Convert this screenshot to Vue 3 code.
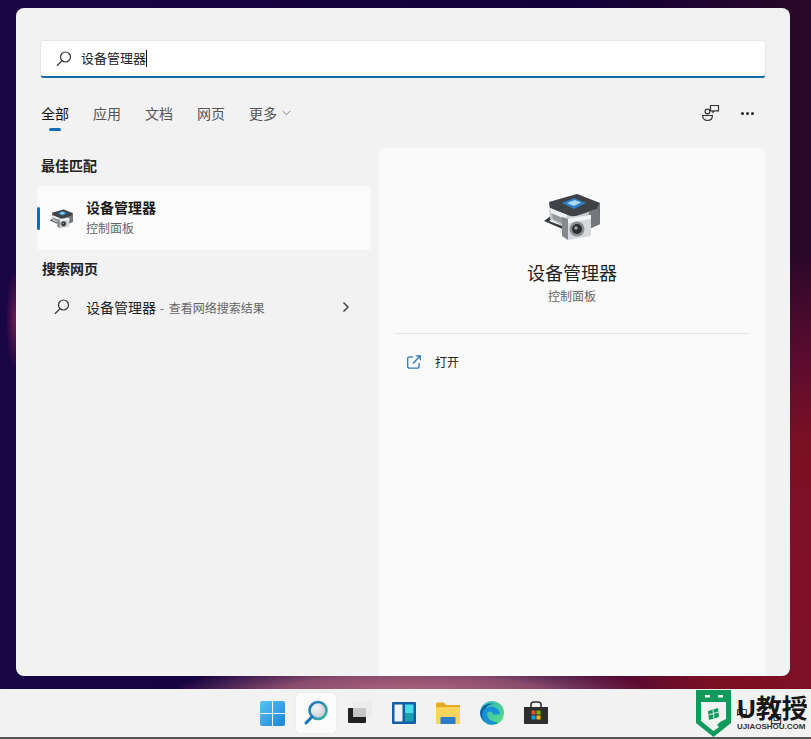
<template>
  <div class="desktop">
    <div class="wallpaper">
      <div class="panel">
        <div class="search-box">
          <svg class="search-icon" width="18" height="18" viewBox="0 0 18 18"><circle cx="10.5" cy="7" r="5" fill="none" stroke="#333" stroke-width="1.2"/><path d="M7 10.6 2 15.8" stroke="#333" stroke-width="1.3" fill="none"/></svg>
          <span class="search-text">设备管理器</span><span class="caret"></span>
        </div>

        <div class="tabs">
          <div v-for="(tab, i) in tabs" :key="tab" class="tab" :class="{ active: i === 0 }">
            {{ tab }}
            <svg v-if="tab === '更多'" class="more-arrow" width="9" height="6" viewBox="0 0 9 6"><path d="M.8 1 4.5 4.7 8.2 1" fill="none" stroke="#888" stroke-width="1"/></svg>
          </div>
          <div class="tab-tools">
            <svg width="20" height="20" viewBox="0 0 20 20" fill="none" stroke="#333" stroke-width="1.2">
              <circle cx="6.500" cy="8.500" r="2.400"/>
              <path d="M1.600 12.500h9.800c0 3-2 5-4.900 5s-4.900-2-4.900-5Z"/>
              <path d="M9.500 2.500h8v5.300h-4l-1.500 1.500V7.800h-2.500Z"/>
            </svg>
            <div class="dots"><i></i><i></i><i></i></div>
          </div>
        </div>

        <div class="content">
          <div class="results">
            <h3 class="group-title">最佳匹配</h3>
            <div class="best-card">
              <span class="marker"></span>
              <svg class="small-device" width="29" height="23" viewBox="0 0 70 56">
                <use href="#device-icon"/>
              </svg>
              <div class="best-text">
                <div class="best-name">设备管理器</div>
                <div class="best-sub">控制面板</div>
              </div>
            </div>
            <h3 class="group-title web-title">搜索网页</h3>
            <div class="web-row">
              <svg class="web-search" width="18" height="18" viewBox="0 0 18 18"><circle cx="10.5" cy="7" r="5" fill="none" stroke="#333" stroke-width="1.2"/><path d="M7 10.6 2 15.8" stroke="#333" stroke-width="1.3" fill="none"/></svg>
              <span class="web-name">设备管理器</span>
              <span class="web-hint">- 查看网络搜索结果</span>
              <svg class="chevron" width="8" height="12" viewBox="0 0 8 12"><path d="M1.5 1.5 6 6l-4.500 4.500" fill="none" stroke="#444" stroke-width="1.5"/></svg>
            </div>
          </div>

          <div class="detail">
            <svg class="big-device" width="70" height="56" viewBox="0 0 70 56">
              <defs>
                <g id="device-icon">
                  <!-- paper tray -->
                  <path d="M7 33 15 27l2 1.500-5 4.500 16 6v3Z" fill="#34373a"/>
                  <!-- printer body -->
                  <path d="M12 14 40 6 63 15V36L40 46 13 31Z" fill="#bfc1c4"/>
                  <path d="M12 14 40 6 63 15 60 21 36 29 13 20Z" fill="#3f4347"/>
                  <path d="M63 15V36L52 41V24L60 21Z" fill="#6d7175"/>
                  <path d="M52 24 60 21l3 6v9l-11 5Z" fill="#74787c"/>
                  <path d="M13 20 30 27v5L14 25Z" fill="#eeeff0"/>
                  <path d="M15 25.500 28 31v6L16 31Z" fill="#96999c"/>
                  <!-- screen -->
                  <path d="M25 15 37 10 49 15 37 21Z" fill="#2f7fc4"/>
                  <path d="M30 15 38 12l6 2.500-7 3.500Z" fill="#a9d8f2"/>
                  <!-- camera -->
                  <path d="M25 29 54 27V48L31 52 25 48Z" fill="#d6d8da"/>
                  <path d="M25 29l6 2V52l-6-4Z" fill="#85888c"/>
                  <path d="M31 31 54 27v4L31 35Z" fill="#f3f4f5"/>
                  <circle cx="40" cy="41" r="7.500" fill="#8b8e91"/>
                  <circle cx="40" cy="41" r="5" fill="#2b2d30"/>
                  <circle cx="39" cy="40" r="1.800" fill="#9fa5ab"/>
                </g>
              </defs>
              <use href="#device-icon"/>
            </svg>
            <div class="detail-name">设备管理器</div>
            <div class="detail-sub">控制面板</div>
            <div class="detail-line"></div>
            <div class="open-row">
              <svg width="16" height="16" viewBox="0 0 16 16" fill="none" stroke="#2c78b8" stroke-width="1.300"><path d="M7 2.800H3.500a1.800 1.800 0 0 0-1.800 1.800v7.800a1.800 1.800 0 0 0 1.800 1.800h7.800a1.800 1.800 0 0 0 1.800-1.800V9"/><path d="M7 9.500 14 2M9.800 1.800h4.500v4.500"/></svg>
              <span>打开</span>
            </div>
          </div>
        </div>
      </div>
    </div>

    <div class="taskbar">
      <div class="task-icon">
        <svg width="25" height="25" viewBox="0 0 24 24">
          <defs>
            <linearGradient id="win" x1="0" y1="0" x2="1" y2="1"><stop offset="0" stop-color="#56c5f3"/><stop offset="1" stop-color="#1b83d6"/></linearGradient>
          </defs>
          <path d="M0 2a2 2 0 0 1 2-2h9.500v11.500H0ZM12.500 0H22a2 2 0 0 1 2 2v9.500H12.500ZM0 12.500h11.500V24H2a2 2 0 0 1-2-2ZM12.500 12.500H24V22a2 2 0 0 1-2 2h-9.500Z" fill="url(#win)"/>
        </svg>
      </div>
      <div class="task-icon active">
        <svg width="26" height="26" viewBox="0 0 26 26">
          <defs>
            <linearGradient id="lens" x1="0" y1="0" x2="1" y2="1"><stop offset="0" stop-color="#1c6fc0"/><stop offset="1" stop-color="#37b89a"/></linearGradient>
            <radialGradient id="glass" cx=".4" cy=".35" r=".7"><stop offset="0" stop-color="#f6f6f8"/><stop offset="1" stop-color="#c2c6cf"/></radialGradient>
          </defs>
          <circle cx="15" cy="10.500" r="8.500" fill="url(#glass)" stroke="url(#lens)" stroke-width="2.600"/>
          <path d="M9 16.800 3 23" stroke="#1a70bd" stroke-width="3" stroke-linecap="round"/>
        </svg>
      </div>
      <div class="task-icon">
        <svg width="24" height="24" viewBox="0 0 24 24">
          <rect x="5" y="0" width="19" height="16" rx="1" fill="#ececec"/>
          <rect x="0" y="7" width="18" height="15" rx="1" fill="#222"/>
          <rect x="5" y="7" width="13" height="9" fill="#c6c6c6"/>
        </svg>
      </div>
      <div class="task-icon">
        <svg width="24" height="24" viewBox="0 0 24 24">
          <rect x="0" y="1" width="24" height="22" rx="1" fill="#125ea8"/>
          <rect x="2.500" y="3.500" width="8" height="17" fill="#eef3f8"/>
          <rect x="13" y="3.500" width="8.500" height="9" fill="#46dbe6"/>
          <rect x="13" y="12.500" width="8.500" height="8" fill="#19a0b0"/>
        </svg>
      </div>
      <div class="task-icon">
        <svg width="24" height="24" viewBox="0 0 24 24">
          <path d="M0 3a1.500 1.500 0 0 1 1.500-1.500H8L10 4h14v4H0Z" fill="#e5a91f"/>
          <path d="M0 6h24v16a1 1 0 0 1-1 1H1a1 1 0 0 1-1-1Z" fill="#fbd45c"/>
          <path d="M4.500 17a1 1 0 0 1 1-1h13a1 1 0 0 1 1 1v6h-15Z" fill="#2b7dcb"/>
        </svg>
      </div>
      <div class="task-icon">
        <svg width="24" height="24" viewBox="0 0 24 24">
          <defs>
            <linearGradient id="edge" x1="0" y1="0" x2="1" y2="1"><stop offset="0" stop-color="#2fb6c4"/><stop offset="1" stop-color="#5adf7f"/></linearGradient>
          </defs>
          <circle cx="12" cy="12" r="12" fill="url(#edge)"/>
          <path d="M0 12C1 5 8 1 14 3c-6 0-10 4-9 9 .8 6 8 10 13 9.300A12 12 0 0 1 0 12Z" fill="#115ea5"/>
          <path d="M2.500 12c1-5 6-7 10.500-6 4 .8 6.500 3 7 7.500h-7c0-2.500-2-3.500-4-3-2 .6-2.500 3-1.500 5 1.500 3.500 6 6 10.500 6.300-2 1.500-6 2.200-9 1.400C4 21.500 1.500 16.500 2.500 12Z" fill="#1790d8"/>
        </svg>
      </div>
      <div class="task-icon">
        <svg width="24" height="24" viewBox="0 0 24 24">
          <path d="M7 6V3.500A2.500 2.500 0 0 1 9.500 1h5A2.500 2.500 0 0 1 17 3.500V6" fill="none" stroke="#2b2b2b" stroke-width="1.600"/>
          <path d="M0 6h24v16a1 1 0 0 1-1 1H1a1 1 0 0 1-1-1Z" fill="#2d2d2d"/>
          <rect x="7.500" y="9.500" width="4" height="4" fill="#f05323"/>
          <rect x="12.500" y="9.500" width="4" height="4" fill="#7dba02"/>
          <rect x="7.500" y="14.500" width="4" height="4" fill="#02a4ef"/>
          <rect x="12.500" y="14.500" width="4" height="4" fill="#fdb902"/>
        </svg>
      </div>

      <div class="watermark">
        <svg width="37" height="47" viewBox="0 0 37 47">
          <path d="M1 0h35v33L18.500 47 1 33Z" fill="#109a5c"/>
          <rect x="10" y="5" width="5" height="2.500" fill="#f2f2f2"/>
          <rect x="23" y="5" width="5" height="2.500" fill="#f2f2f2"/>
          <path d="M6 12h25v17l-6 3-3 3 2 2-5.500 4L6 31Z" fill="#f2f2f2"/>
          <path d="M13 21l10-3 1 9-10 3Z" fill="#109a5c"/>
          <path d="M18 19.500l.9 9M13.500 25l10-3" stroke="#f2f2f2" stroke-width=".9"/>
        </svg>
        <div class="mark-text">
          <div class="mark-title">U教授</div>
          <div class="mark-url">UJIAOSHOU.COM</div>
        </div>
        <span class="ime ime-a">中</span>
        <span class="ime ime-b">回</span>
      </div>
    </div>
  </div>
</template>

<script setup>
const tabs = ['全部', '应用', '文档', '网页', '更多']
</script>

<style>
html, body {
  margin: 0;
  height: 100%;
  overflow: hidden;
}
</style>

<style scoped>
.desktop {
  width: 811px;
  height: 739px;
  display: flex;
  flex-direction: column;
  font-family: "Noto Sans CJK SC", "Liberation Sans", sans-serif;
  color: #1a1a1a;
}

.wallpaper {
  height: 689px;
  box-sizing: border-box;
  padding: 8px 21px 13px 16px;
  background:
    radial-gradient(ellipse 240px 36px at 410px 694px, #b4687e 0%, rgba(176, 100, 125, 0.75) 55%, rgba(176, 100, 125, 0) 100%),
    radial-gradient(ellipse 330px 340px at 830px 590px, #801028 0%, #7a1024 45%, rgba(110, 12, 50, 0.7) 70%, rgba(80, 10, 60, 0) 100%),
    radial-gradient(ellipse 9px 50px at 15px 320px, #6a1e4c 0%, rgba(106, 30, 76, 0) 100%),
    linear-gradient(90deg, #1a0545 0%, #10003a 70%, #2a0828 100%);
}

.panel {
  height: 668px;
  box-sizing: border-box;
  background: #f2f2f2;
  border-radius: 8px;
  padding: 32px 24px 0;
  display: flex;
  flex-direction: column;
}

.search-box {
  height: 38px;
  box-sizing: border-box;
  background: #fff;
  border: 1px solid #e6e6e6;
  border-bottom: 2px solid #0f6ca5;
  border-radius: 4px;
  display: flex;
  align-items: center;
  padding-left: 14px;
}

.search-icon {
  margin-right: 8px;
}

.search-text {
  font-size: 13px;
  color: #222;
  margin-bottom: 2px;
}

.caret {
  width: 1px;
  height: 17px;
  background: #111;
}

.tabs {
  display: flex;
  align-items: center;
  margin-top: 26px;
  height: 18px;
  gap: 24px;
}

.tab {
  position: relative;
  font-size: 14px;
  line-height: 18px;
  color: #555;
  display: flex;
  align-items: center;
}

.tab.active {
  color: #111;
  margin-left: 1px;
}

.tab.active::after {
  content: "";
  position: absolute;
  left: 8px;
  width: 12px;
  height: 3px;
  bottom: -9px;
  border-radius: 2px;
  background: #0f6cb5;
}

.more-arrow {
  margin-left: 5px;
}

.tab-tools {
  margin-left: auto;
  display: flex;
  align-items: center;
  gap: 20px;
  padding-right: 12px;
}

.dots {
  display: flex;
  gap: 2px;
}

.dots i {
  width: 3px;
  height: 3px;
  border-radius: 50%;
  background: #222;
}

.content {
  flex: 1;
  display: flex;
  margin-top: 26px;
  gap: 8px;
  min-height: 0;
}

.results {
  width: 334px;
  margin-left: -3px;
}

.group-title {
  margin: 8px 0 0 4px;
  font-size: 14px;
  line-height: 18px;
  font-weight: 700;
  color: #222;
}

.best-card {
  position: relative;
  height: 64px;
  margin-top: 12px;
  background: #fbfbfb;
  border-radius: 4px;
  display: flex;
  align-items: center;
}

.marker {
  position: absolute;
  left: 0;
  top: 21px;
  width: 3px;
  height: 23px;
  border-radius: 2px;
  background: #0f6cb5;
}

.small-device {
  margin: 0 10px;
}

.best-text {
  padding-bottom: 2px;
}

.best-name {
  font-size: 14px;
  line-height: 18px;
  font-weight: 700;
  color: #1a1a1a;
}

.best-sub {
  font-size: 12px;
  line-height: 16px;
  margin-top: 4px;
  color: #666;
}

.web-title {
  margin-top: 9px;
  margin-left: 5px;
}

.web-row {
  height: 32px;
  margin-top: 14px;
  display: flex;
  align-items: center;
  padding-left: 16px;
}

.web-search {
  margin-right: 15px;
}

.web-name {
  font-size: 14px;
  color: #222;
}

.web-hint {
  margin-left: 4px;
  font-size: 12px;
  word-spacing: 2px;
  color: #666;
}

.chevron {
  margin-left: auto;
  margin-right: 21px;
}

.detail {
  flex: 1;
  margin-right: 1px;
  background: #fafafa;
  border-radius: 8px 8px 0 0;
  display: flex;
  flex-direction: column;
  align-items: center;
  padding-top: 40px;
}

.big-device {
  display: block;
  margin-right: 0;
}

.detail-name {
  margin-top: 16px;
  font-size: 18px;
  line-height: 24px;
  color: #222;
}

.detail-sub {
  margin-top: 4px;
  font-size: 12px;
  line-height: 16px;
  color: #666;
}

.detail-line {
  align-self: stretch;
  height: 1px;
  margin: 29px 16px 0;
  background: #e5e5e5;
}

.open-row {
  align-self: stretch;
  display: flex;
  align-items: center;
  gap: 13px;
  margin-top: 20px;
  padding-left: 27px;
  font-size: 12px;
  line-height: 16px;
  color: #222;
}

.taskbar {
  position: relative;
  height: 50px;
  box-sizing: border-box;
  background: #f2f2f2;
  border-bottom: 2px solid #555;
  display: flex;
  justify-content: center;
  align-items: center;
  gap: 4px;
  padding-right: 3px;
}

.task-icon {
  width: 40px;
  height: 40px;
  display: flex;
  align-items: center;
  justify-content: center;
  border-radius: 4px;
}

.task-icon.active {
  background: #fbfbfb;
  box-shadow: 0 0 1px rgba(0, 0, 0, 0.2);
}

.watermark {
  position: absolute;
  left: 695px;
  top: 1px;
  display: flex;
  align-items: flex-start;
  gap: 5px;
}

.mark-title {
  font-family: "Liberation Sans", "Noto Sans CJK SC", sans-serif;
  font-size: 26px;
  line-height: 26px;
  font-weight: 700;
  color: #161616;
  white-space: nowrap;
  margin-top: 6px;
}

.mark-url {
  font-family: "Liberation Sans", sans-serif;
  font-size: 8px;
  line-height: 10px;
  font-weight: 700;
  color: #333;
  white-space: nowrap;
}

.ime {
  position: absolute;
  font-size: 12px;
  line-height: 14px;
  color: #111;
}

.ime-a {
  left: 41px;
  top: 16px;
}

.ime-b {
  left: 75px;
  top: 22px;
}
</style>
